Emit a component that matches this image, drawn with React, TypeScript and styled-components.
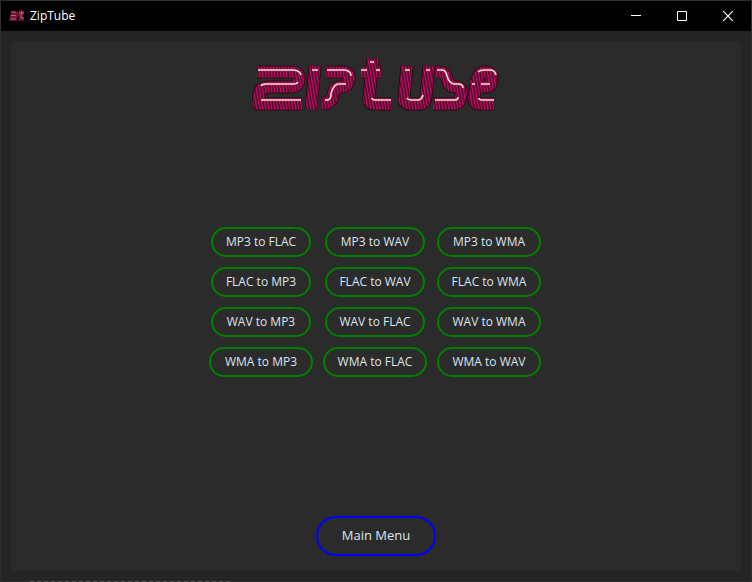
import React from "react";
import styled, { createGlobalStyle } from "styled-components";

const GlobalStyle = createGlobalStyle`
  * { box-sizing: border-box; }
  body { margin: 0; background: #242424; }
  button { font-family: inherit; }
`;

const Window = styled.div`
  display: flex;
  flex-direction: column;
  min-height: 100vh;
  border: 1px solid #2d2d2d;
  background: #242424;
  color: #dce4ee;
  font-family: "Open Sans", "Noto Sans", sans-serif;
`;

const TitleBar = styled.header`
  display: flex;
  align-items: center;
  height: 30px;
  padding-left: 8px;
  background: #000;
  color: #fff;
`;

const Title = styled.h1`
  flex: 1;
  margin: 0 0 0 5px;
  font-size: 12px;
  font-weight: 400;
  line-height: 16px;
`;

const CaptionButton = styled.button`
  display: grid;
  place-items: center;
  width: 46px;
  height: 30px;
  padding: 0;
  border: 0;
  background: transparent;
  color: #fff;
`;

const Panel = styled.main`
  display: flex;
  flex: 1;
  flex-direction: column;
  align-items: center;
  justify-content: space-between;
  margin: 10px;
  padding: 15px 0;
  border-radius: 4px;
  background: #2b2b2b;
`;

const Formats = styled.section`
  display: grid;
  grid-template-columns: repeat(3, 104px);
  gap: 10px;
  justify-items: center;
  margin: -25px 2px 0 0;
`;

const PillButton = styled.button<{ $wide?: boolean }>`
  width: ${(p) => (p.$wide ? 104 : 100)}px;
  height: 30px;
  padding: 0;
  border: 2px solid #008000;
  border-radius: 15px;
  background: transparent;
  color: #dce4ee;
  font-size: 12px;
  line-height: 16px;
  white-space: nowrap;
`;

const MenuButton = styled(PillButton)`
  width: 120px;
  height: 40px;
  padding-bottom: 2px;
  border-color: #0000ff;
  border-radius: 20px;
  font-size: 13px;
`;

const DottedEdge = styled.div`
  width: 202px;
  height: 1px;
  margin: 0 0 -1px 29px;
  background: repeating-linear-gradient(90deg, #55554f 0 4px, #2d2d2d 4px 7px);
`;

const ribbons = [
  "M257 72H291Q300 72 299 80Q298 87 290 87H268Q260 87 259 95L258 104H302",
  "M315 66L311 109",
  "M326 72H342Q350 72 349 79Q348 87 340 87Q334 87 333 95Q332 103 322 104",
  "M361 72H381M373 59L369 97Q368 104 375 104H391",
  "M407 66L404 97Q403 104 410 104H418Q425 104 426 97L429 66",
  "M436 72H440Q445 72 447 79Q449 87 456 87Q463 87 461 96Q460 104 453 104H433",
  "M471 86L476 84M478 87H485Q492 87 492 79Q492 72 485 72Q479 72 477 80L474 97Q473 104 480 104H494",
].join("");

const highlights = [
  "M258 70H294Q300 71 301 75",
  "M261 86Q262 84 266 84H293Q297 84 298 82",
  "M261 100H301",
  "M312 70H318",
  "M327 70H345Q351 71 351 76",
  "M325 100H328Q331 99 331 94Q333 85 338 84H346",
  "M361 70H367M370 62H374M376 70H380",
  "M372 98Q372 100 375 100H391",
  "M405 70H410M407 98Q408 100 412 100H419Q422 99 423 95M426 70H430",
  "M437 70H443Q446 71 447 76Q449 83 454 84H458Q463 84 463 88",
  "M435 100H455Q458 100 458 97",
  "M478 72Q480 70 484 70H490Q495 70 496 75",
  "M472 84H475M481 84H490M479 98Q479 100 482 100H494",
].join("");

function Logo() {
  return (
    <svg width="248" height="56" viewBox="252 56 248 56" role="img" aria-label="ZipTube" fill="none">
      <defs>
        <pattern id="stripes" width="3" height="12" patternUnits="userSpaceOnUse" patternTransform="skewX(10)">
          <rect width="3" height="12" fill="#430b1b" />
          <rect width="1.4" height="12" fill="#c40d70" />
        </pattern>
      </defs>
      <g strokeLinejoin="round">
        <path d={ribbons} stroke="#260c10" strokeWidth="13" />
        <path d={ribbons} stroke="#a70758" strokeWidth="11" />
        <path d={ribbons} stroke="#38091a" strokeWidth="9" />
        <path d={ribbons} stroke="url(#stripes)" strokeWidth="10" />
        <path d={highlights} stroke="#8e2348" strokeWidth="3" />
        <path d={highlights} stroke="#ffd5d8" strokeWidth="1.5" />
      </g>
    </svg>
  );
}

function AppIcon() {
  return (
    <svg width="16" height="16" viewBox="0 0 16 16" fill="none" aria-hidden="true">
      <path d="M2 5H7Q9 5 8 7.500H3L2 11H8M10 5H15M12.500 2L11.500 11H15" stroke="#751536" strokeWidth="3.500" />
      <path d="M2 4H7M2 7.500H7M2 11H7M10 5H15M12.500 3L12 10H15" stroke="#cc5b7d" />
    </svg>
  );
}

const conversions = [
  ["MP3 to FLAC", false], ["MP3 to WAV", false], ["MP3 to WMA", true],
  ["FLAC to MP3", false], ["FLAC to WAV", false], ["FLAC to WMA", true],
  ["WAV to MP3", false], ["WAV to FLAC", false], ["WAV to WMA", true],
  ["WMA to MP3", true], ["WMA to FLAC", true], ["WMA to WAV", true],
] as const;

export default function App() {
  return (
    <>
      <GlobalStyle />
      <Window>
        <TitleBar>
          <AppIcon />
          <Title>ZipTube</Title>
          <CaptionButton aria-label="Minimize">
            <svg width="10" height="10"><path d="M0 4.500H10" stroke="currentColor" /></svg>
          </CaptionButton>
          <CaptionButton aria-label="Maximize">
            <svg width="10" height="10"><path d="M.5 .5H9.500V9.500H.5Z" fill="none" stroke="currentColor" /></svg>
          </CaptionButton>
          <CaptionButton aria-label="Close">
            <svg width="10" height="10"><path d="M0 0L10 10M10 0L0 10" stroke="currentColor" strokeWidth="1.200" /></svg>
          </CaptionButton>
        </TitleBar>
        <Panel>
          <Logo />
          <Formats aria-label="Conversions">
            {conversions.map(([label, wide]) => (
              <PillButton key={label} $wide={wide}>{label}</PillButton>
            ))}
          </Formats>
          <MenuButton>Main Menu</MenuButton>
        </Panel>
        <DottedEdge />
      </Window>
    </>
  );
}
